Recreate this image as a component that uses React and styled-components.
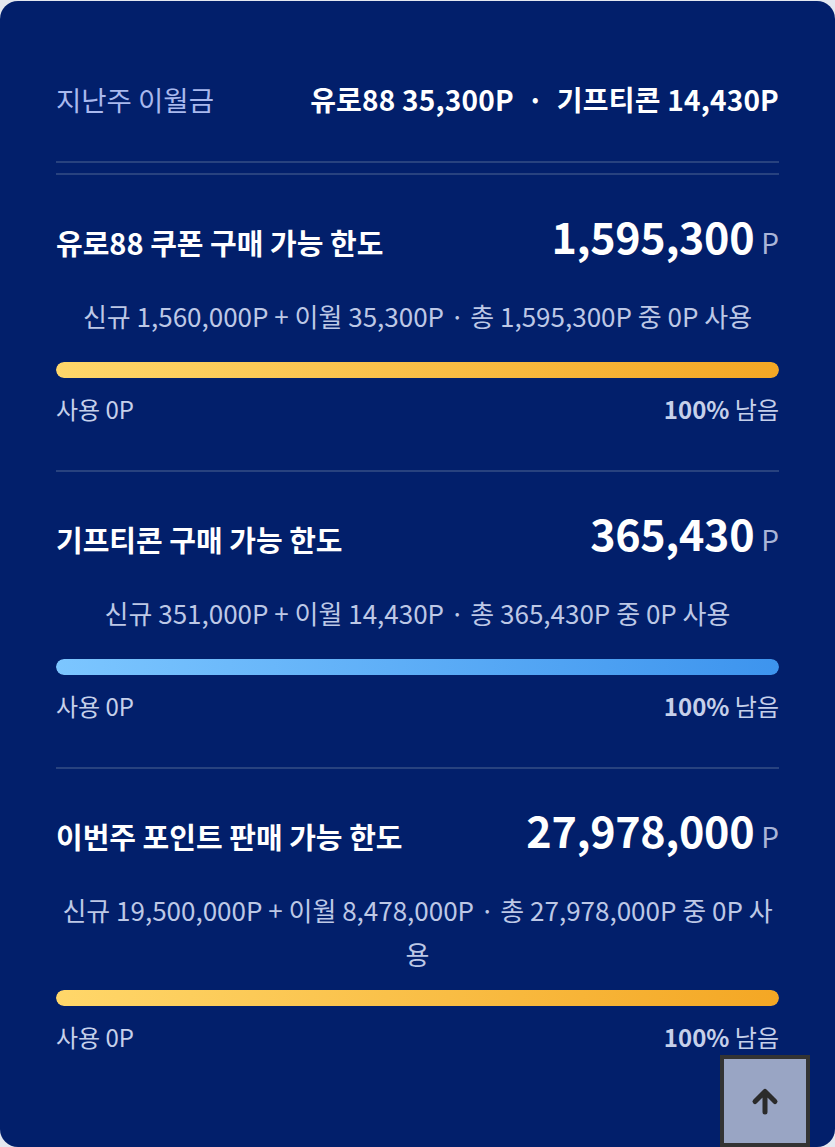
import React from "react";
import styled, { createGlobalStyle } from "styled-components";

const GlobalStyle = createGlobalStyle`
  html, body {
    margin: 0;
    padding: 0;
    background: #e4e8f0;
    font-family: "Noto Sans CJK KR", "Noto Sans", sans-serif;
  }
  * { box-sizing: border-box; }
`;

const Card = styled.div`
  margin-top: 1px;
  min-height: 1146px;
  background: #021f6b;
  border-radius: 18px;
  padding: 0 56px 40px;
`;

const Header = styled.div`
  display: flex;
  align-items: center;
  justify-content: space-between;
  padding: 80px 0 44px;
  line-height: 36px;
  border-bottom: 2px solid #28427f;
`;

const HeaderLabel = styled.span`
  font-size: 27.5px;
  color: #a9b9ee;
`;

const HeaderValue = styled.span`
  font-size: 28px;
  font-weight: 700;
  color: #ffffff;
  white-space: pre;
  letter-spacing: 0.2px;
`;

const Sections = styled.div`
  margin-top: 10px;
`;

const Section = styled.section`
  border-top: 2px solid #28427f;
  padding: 37px 0 46px;
`;

const TitleRow = styled.div`
  display: flex;
  align-items: center;
  justify-content: space-between;
  height: 60px;
`;

const Title = styled.h3`
  margin: 0;
  font-size: 29px;
  font-weight: 700;
  color: #ffffff;
`;

const Amount = styled.div`
  display: flex;
  align-items: baseline;
  color: #ffffff;
  line-height: 1;
  margin-top: -14px;
`;

const AmountNum = styled.span`
  font-size: 43px;
  font-weight: 700;
  letter-spacing: -0.3px;
`;

const AmountUnit = styled.span`
  font-size: 28px;
  color: #a9b5d8;
  margin-left: 7px;
`;

const Sub = styled.p`
  margin: 22px 0 0;
  text-align: center;
  font-size: 26px;
  line-height: 44px;
  color: #bdc8e6;
  letter-spacing: 0;
`;

const Track = styled.div`
  margin-top: ${(p) => p.$gap}px;
  height: 16px;
  border-radius: 8px;
  background: #1a3578;
  overflow: hidden;
`;

const Fill = styled.div`
  height: 100%;
  border-radius: 8px;
  background: ${(p) =>
    p.$tone === "blue"
      ? "linear-gradient(90deg, #7cc6ff 0%, #3d94ee 100%)"
      : "linear-gradient(90deg, #ffd76a 0%, #f4a724 100%)"};
`;

const Labels = styled.div`
  display: flex;
  justify-content: space-between;
  margin-top: 16px;
  line-height: 30px;
  font-size: 24px;
  color: #c6d0ea;
`;

const Strong = styled.b`
  font-weight: 700;
`;

const TopButton = styled.button`
  position: fixed;
  right: 25px;
  bottom: 0;
  width: 90px;
  height: 92px;
  border: 4px solid #333333;
  background: rgba(255, 255, 255, 0.6);
  display: flex;
  align-items: center;
  justify-content: center;
  padding: 0;
  cursor: pointer;
`;

const sections = [
  {
    title: "유로88 쿠폰 구매 가능 한도",
    amount: "1,595,300",
    sub: "신규 1,560,000P + 이월 35,300P · 총 1,595,300P 중 0P 사용",
    tone: "gold",
    gap: 24,
  },
  {
    title: "기프티콘 구매 가능 한도",
    amount: "365,430",
    sub: "신규 351,000P + 이월 14,430P · 총 365,430P 중 0P 사용",
    tone: "blue",
    gap: 24,
  },
  {
    title: "이번주 포인트 판매 가능 한도",
    amount: "27,978,000",
    sub: "신규 19,500,000P + 이월 8,478,000P · 총 27,978,000P 중 0P 사용",
    tone: "gold",
    gap: 14,
  },
];

export default function App() {
  return (
    <>
      <GlobalStyle />
      <Card>
        <Header>
          <HeaderLabel>지난주 이월금</HeaderLabel>
          <HeaderValue>유로88 35,300P  ·  기프티콘 14,430P</HeaderValue>
        </Header>
        <Sections>
          {sections.map((s) => (
            <Section key={s.title}>
              <TitleRow>
                <Title>{s.title}</Title>
                <Amount>
                  <AmountNum>{s.amount}</AmountNum>
                  <AmountUnit>P</AmountUnit>
                </Amount>
              </TitleRow>
              <Sub>{s.sub}</Sub>
              <Track $gap={s.gap}>
                <Fill $tone={s.tone} style={{ width: "100%" }} />
              </Track>
              <Labels>
                <span>사용 0P</span>
                <span>
                  <Strong>100%</Strong> 남음
                </span>
              </Labels>
            </Section>
          ))}
        </Sections>
      </Card>
      <TopButton aria-label="맨 위로">
        <svg width="32" height="32" viewBox="0 0 32 32" fill="none">
          <path
            d="M16 27V7M6 16.5L16 6.5l10 10"
            stroke="#2b2b2b"
            strokeWidth="5"
            strokeLinecap="round"
            strokeLinejoin="round"
          />
        </svg>
      </TopButton>
    </>
  );
}
